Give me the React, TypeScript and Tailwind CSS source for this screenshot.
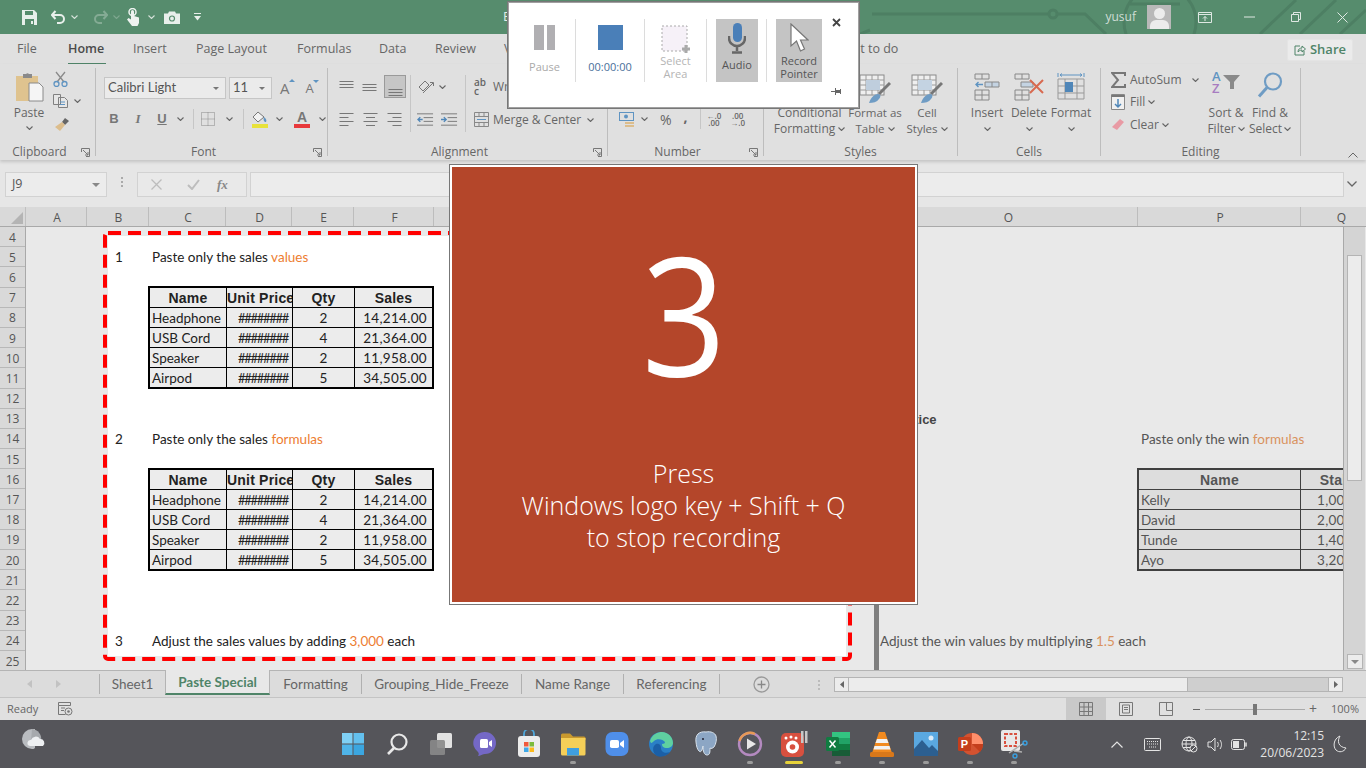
import React from "react";

const Chev = ({ c = "#666", className = "" }: { c?: string; className?: string }) => (
  <svg width="7" height="4" viewBox="0 0 7 4" className={`shrink-0 ${className}`}><path d="M.5.5 3.5 3.5 6.5.5" fill="none" stroke={c} strokeWidth="1.1" /></svg>
);
const Launcher = () => (
  <svg width="9" height="9" viewBox="0 0 9 9"><path d="M.5 4V.5H8.5V8.5H5" fill="none" stroke="#777" /><path d="M2 2 7 7M7 4V7H4" fill="none" stroke="#777" /></svg>
);
const Sep = ({ className = "h-[22px]" }: { className?: string }) => <div className={`w-px bg-[#c6c6c6] shrink-0 ${className}`} />;

const Lines = ({ kind }: { kind: "top" | "mid" | "bot" | "l" | "c" | "r" }) => {
  const y = kind === "top" ? [3, 6, 9] : kind === "mid" ? [6, 9, 12] : kind === "bot" ? [10, 13, 16] : [2, 6, 10, 14];
  const w = (i: number) => (kind === "l" || kind === "c" || kind === "r" ? (i % 2 ? 9 : 14) : 14);
  return (
    <svg width="15" height="18" viewBox="0 0 15 18">
      {y.map((v, i) => {
        const x = kind === "r" ? 14.5 - w(i) : kind === "c" ? (15 - w(i)) / 2 : 0.5;
        return <path key={v} d={`M${x} ${v + 0.5}h${w(i)}`} stroke="#777" />;
      })}
    </svg>
  );
};
const Indent = ({ rev }: { rev?: boolean }) => (
  <svg width="17" height="15" viewBox="0 0 18 15">
    <path d="M0 1.5H17M7 5.5H17M7 9.5H17M0 13.5H17" stroke="#777" />
    {rev ? <path d="M6 7.5H1M3.5 5 1 7.5 3.5 10" fill="none" stroke="#4f86b8" strokeWidth="1.4" /> : <path d="M0 7.5H5M3 5 5.5 7.5 3 10" fill="none" stroke="#4f86b8" strokeWidth="1.4" />}
  </svg>
);

const Group = ({ w, label, launcher, children }: { w: string; label: string; launcher?: boolean; children: React.ReactNode }) => (
  <div className={`${w} h-[88px] shrink-0 border-r border-[#bdbdbd] flex flex-col`}>
    <div className="h-[78px] flex">{children}</div>
    <div className="h-[10px] grid grid-cols-[1fr_auto_1fr] px-[3px] leading-[12px] text-[12px] text-[#666]">
      <div />
      <div className={launcher ? "-translate-x-[8px]" : ""}>{label}</div>
      <div className="flex justify-end items-start pt-[2px] pr-[2px]">{launcher && <Launcher />}</div>
    </div>
  </div>
);

const TableIcon = ({ fill = "#bfcedd" }: { fill?: string }) => (
  <svg width="32" height="30" viewBox="0 0 32 30">
    <rect x="1" y="1" width="24" height="20" fill="#efefef" stroke="#8a8a8a" />
    <path d="M1 6H25M1 11H25M1 16H25M7 1V21M13 1V21M19 1V21" stroke="#9a9a9a" />
    <rect x="7" y="6" width="14" height="10" fill={fill} />
    <path d="M31 9 20 20" stroke="#777" strokeWidth="3" />
    <path d="M10 29c2-6 6-9 9-9 3 0 3 3 1 5-2 3-6 4-10 4Z" fill="#6f9cc4" />
  </svg>
);

const hash = "########";
const SalesTable = () => {
  const rows = [
    ["Headphone", hash, "2", "14,214.00"],
    ["USB Cord", hash, "4", "21,364.00"],
    ["Speaker", hash, "2", "11,958.00"],
    ["Airpod", hash, "5", "34,505.00"],
  ];
  return (
    <div className="ml-[45px] w-[286px] h-[103px] border-2 border-black bg-[#ececec] grid grid-cols-[77px_66px_62px_77px] grid-rows-[20px_20px_20px_20px_19px] text-[13.5px] leading-[20px] text-[#222]">
      {["Name", "Unit Price", "Qty", "Sales"].map((h, i) => (
        <div key={h} className={`border-b border-black font-['Liberation_Sans'] font-bold text-[14px] tracking-[0.2px] overflow-hidden whitespace-nowrap ${i === 1 ? "" : "text-center"} ${i < 3 ? "border-r" : ""}`}>{h}</div>
      ))}
      {rows.map((r, ri) =>
        r.map((c, i) => (
          <div key={ri + "-" + i} className={`overflow-hidden whitespace-nowrap border-black ${ri < 3 ? "border-b" : ""} ${i < 3 ? "border-r" : ""} ${i === 0 ? "pl-[2px]" : i === 1 ? "text-right pr-[4px] text-[13px] tracking-[-1.3px]" : i === 2 ? "text-center" : "text-right pr-[5px] tracking-[0.3px]"}`}>{c}</div>
        ))
      )}
    </div>
  );
};

const WinTable = () => {
  const rows = [["Kelly", "1,000"], ["David", "2,000"], ["Tunde", "1,400"], ["Ayo", "3,200"]];
  return (
    <div className="ml-[258px] w-[240px] h-[103px] border-2 border-[#404040] bg-[#dddddd] grid grid-cols-[162px_76px] grid-rows-[20px_20px_20px_20px_19px] text-[13.5px] leading-[20px] text-[#555]">
      <div className="border-b border-r border-[#404040] font-['Liberation_Sans'] font-bold text-[14px] tracking-[0.2px] text-center">Name</div>
      <div className="border-b border-[#404040] font-['Liberation_Sans'] font-bold text-[14px] tracking-[0.2px] text-center">Stake</div>
      {rows.map((r, ri) => (
        <React.Fragment key={r[0]}>
          <div className={`border-r border-[#404040] pl-[2px] ${ri < 3 ? "border-b" : ""}`}>{r[0]}</div>
          <div className={`border-[#404040] pl-[16px] tracking-[0.3px] ${ri < 3 ? "border-b" : ""}`}>{r[1]}</div>
        </React.Fragment>
      ))}
    </div>
  );
};

const Line = ({ n, children }: { n: string; children: React.ReactNode }) => (
  <div className="h-[20px] flex items-center text-[13.5px] text-[#222]">
    <span className="ml-[12px] w-[37px]">{n}</span>
    <span>{children}</span>
  </div>
);

const columns: [string, string][] = [
  ["A", "w-[61px]"], ["B", "w-[62px]"], ["C", "w-[77px]"], ["D", "w-[66px]"], ["E", "w-[62px]"], ["F", "w-[80px]"], ["", "w-[444px]"], ["O", "w-[260px]"], ["P", "w-[163px]"], ["Q", "w-[80px]"],
];

const TaskIcons: React.ReactNode[] = [
  <svg key="win" width="24" height="24" viewBox="0 0 24 24"><path d="M1 1h10.5v10.5H1z" fill="#7fd0f5" /><path d="M12.5 1H23v10.5H12.5z" fill="#63c0ee" /><path d="M1 12.5h10.5V23H1z" fill="#4fb4e8" /><path d="M12.5 12.5H23V23H12.5z" fill="#3ba6e0" /></svg>,
  <svg key="s" width="24" height="24" viewBox="0 0 24 24"><circle cx="14" cy="10" r="7.5" fill="none" stroke="#e8e8e8" strokeWidth="2.2" /><path d="M9 16 3 22" stroke="#e8e8e8" strokeWidth="2.6" /></svg>,
  <svg key="t" width="26" height="26" viewBox="0 0 26 26"><rect x="9" y="2" width="15" height="15" rx="1.5" fill="#e2e2e2" /><rect x="2" y="9" width="15" height="15" rx="1.5" fill="#8a8a8a" fillOpacity=".9" /></svg>,
  <svg key="c" width="24" height="26" viewBox="0 0 24 26"><path d="M12 1a11 11 0 0 1 0 22c-2 0-5 2-7 2 1-1 1-3 0-4A11 11 0 0 1 12 1Z" fill="#7468c6" /><rect x="7" y="8" width="8" height="9" rx="1.5" fill="#fff" /><path d="M16 11l3-2v7l-3-2Z" fill="#fff" /></svg>,
  <svg key="st" width="24" height="28" viewBox="0 0 24 28"><path d="M7 7V4a5 5 0 0 1 10 0v3" fill="none" stroke="#4fa8dc" strokeWidth="1.8" /><rect x="1" y="6" width="22" height="21" rx="3" fill="#ececec" /><path d="M7 12h4.5v4.5H7z" fill="#f05a3c" /><path d="M12.5 12H17v4.5h-4.5z" fill="#7cbb3c" /><path d="M7 17.5h4.5V22H7z" fill="#3fa8e8" /><path d="M12.5 17.5H17V22h-4.5z" fill="#fcba1c" /></svg>,
  <svg key="e" width="26" height="24" viewBox="0 0 26 24"><path d="M1 3a1.5 1.5 0 0 1 1.5-1.5H10l3 3h11A1.5 1.5 0 0 1 25.5 6v2H1Z" fill="#c9992e" /><path d="M1 6h24.5v16a1.5 1.5 0 0 1-1.5 1.5H2.5A1.5 1.5 0 0 1 1 22Z" fill="#f5cf58" /><path d="M7 16h12v7.5H7z" fill="#3f9fe0" /></svg>,
  <svg key="z" width="24" height="26" viewBox="0 0 24 26"><rect x="0.5" y="1" width="23" height="24" rx="7" fill="#4f8fea" /><rect x="5" y="9" width="9" height="8" rx="1.8" fill="#fff" /><path d="M15 12l4-3v8l-4-3Z" fill="#fff" /></svg>,
  <svg key="ed" width="26" height="26" viewBox="0 0 26 26"><circle cx="13" cy="13" r="12" fill="#2a7fc6" /><path d="M2 10C4 3 10 1 14 1c6 0 11 5 11 11 0 3-3 5-6 5-4 0-5-2-5-4 2 0 3-1 3-2-2-3-8-4-11-1-2 2-3 3-4 0Z" fill="#5fd0a0" /><path d="M9 25c-5-3-5-10-1-12 3-1 5 1 5 4 0 4 4 6 9 4-2 3-8 6-13 4Z" fill="#1b5fa6" /></svg>,
  <svg key="pg" width="26" height="28" viewBox="0 0 26 28"><path d="M13 2C6 1 2 5 3 12c.5 4 1 7 3 9 1 1 2 1 3-1l1-4c0 5 1 9 4 9 3 0 3-3 3-7 1 1 3 0 4-1 2-3 3-8 2-11-1-3-5-5-10-4Z" fill="#8ca6c4" stroke="#d8e2ec" /><circle cx="10" cy="9" r="1" fill="#223" /></svg>,
  <svg key="p" width="26" height="28" viewBox="0 0 26 28"><circle cx="13" cy="14" r="11" fill="#55565c" stroke="#b48ac0" strokeWidth="2.4" /><path d="M2.5 11A11 11 0 0 1 18 4" fill="none" stroke="#e79a55" strokeWidth="2.4" /><path d="M10 8.5 19 14l-9 5.5Z" fill="#e8e8e8" /></svg>,
  <svg key="g" width="28" height="28" viewBox="0 0 28 28"><rect x="1" y="3" width="23" height="24" rx="5" fill="#d8503f" /><circle cx="12.5" cy="17" r="6.5" fill="#fff" /><circle cx="12.5" cy="17" r="2.8" fill="#d8503f" /><circle cx="6" cy="8" r="1.5" fill="#fff" /><circle cx="11" cy="7" r="1.5" fill="#fff" /><circle cx="16" cy="8" r="1.5" fill="#fff" /><path d="M21 1h2.5v12H21zM25 1h2.5v12H25z" fill="#c8c8c8" /></svg>,
  <svg key="x" width="26" height="26" viewBox="0 0 26 26"><rect x="7" y="1" width="18" height="24" rx="1.5" fill="#21a366" /><path d="M7 1h18v6H7z" fill="#33c481" /><path d="M7 13h18v6H7z" fill="#107c41" /><path d="M7 19h18v6H7z" fill="#185c37" /><rect x="1" y="6" width="13" height="14" rx="1.5" fill="#107c41" /><path d="M4.5 9.5 10.5 16.5M10.5 9.5 4.5 16.5" stroke="#fff" strokeWidth="1.5" /></svg>,
  <svg key="v" width="26" height="28" viewBox="0 0 26 28"><path d="M10 2h6l7 21H3Z" fill="#f18a1f" /><path d="M8 9h10l1.5 4h-13ZM5.500 16h15l1 3.500h-17Z" fill="#f1f1f1" /><rect x="1" y="22" width="24" height="5" rx="1.5" fill="#d9781a" /></svg>,
  <svg key="ph" width="26" height="26" viewBox="0 0 26 26"><rect x="1" y="1" width="24" height="24" fill="#5aa8e0" /><path d="M1 25V18L9 9l7 8 3-3 6 6v5Z" fill="#2c5f90" /><circle cx="18" cy="7" r="2.5" fill="#dcebf7" /></svg>,
  <svg key="pp" width="26" height="26" viewBox="0 0 26 26"><circle cx="15" cy="13" r="11" fill="#d35230" /><path d="M15 13V2a11 11 0 0 1 11 11Z" fill="#ff8f6b" /><path d="M15 13h11a11 11 0 0 1-3 8Z" fill="#c43e1c" /><rect x="1" y="6" width="13" height="14" rx="1.5" fill="#c43e1c" /><text x="7.5" y="17" textAnchor="middle" fill="#fff" fontSize="11" fontWeight="700" fontFamily="Liberation Sans">P</text></svg>,
  <svg key="sn" width="28" height="30" viewBox="0 0 28 30"><rect x="1" y="1" width="19" height="21" rx="2" fill="#e8e8e8" /><rect x="5" y="5" width="11" height="12" fill="none" stroke="#d8503f" strokeWidth="2" strokeDasharray="3 1.5" /><path d="M9 24 24 14M14 22l8 1" stroke="#b0b0b0" strokeWidth="1.5" /><circle cx="25" cy="14" r="2" fill="none" stroke="#3aa0e0" strokeWidth="1.4" /><circle cx="15" cy="27" r="2" fill="none" stroke="#3aa0e0" strokeWidth="1.4" /></svg>,
];
const dots = [0, 0, 0, 0, 0, 1, 0, 0, 0, 1, 2, 1, 1, 1, 1, 1];

export default function App() {
  return (
    <div className="relative w-[1366px] h-[768px] overflow-hidden bg-[#e8e8e8] font-['Open_Sans',sans-serif] flex flex-col text-[#555]">
      {/* Title bar */}
      <div className="relative h-[34px] shrink-0 bg-[#568c6d] flex items-center text-[#e3ebe6] overflow-hidden">
        <svg className="absolute left-[860px] top-0" width="506" height="34" viewBox="0 0 506 34">
          <g fill="none" stroke="#4d7f63" strokeWidth="3">
            <path d="M12 14H190" /><circle cx="193" cy="14" r="4" /><circle cx="300" cy="22" r="36" />
            <path d="M196 14H225L246 34M320 4H270M400 34 436 0M440 34 476 0M480 34 506 10M0 34 10 30" />
          </g>
        </svg>
        <div className="relative flex items-center w-[500px]">
          <svg className="ml-[22px]" width="15" height="15" viewBox="0 0 15 15"><path d="M0 0H12L15 3V15H0Z" fill="#e8efeb" /><path d="M3 1h8v4H3z" fill="#568c6d" /><path d="M3 9h9v6H3z" fill="#568c6d" /><path d="M9 11h2v3H9z" fill="#e8efeb" /></svg>
          <svg className="ml-[14px]" width="15" height="14" viewBox="0 0 15 14"><path d="M1 5h8a4 4 0 0 1 0 8H6M4.5 1 1 5l3.5 4" fill="none" stroke="#e8efeb" strokeWidth="2" /></svg>
          <Chev c="#d5e2da" className="ml-[5px]" />
          <svg className="ml-[15px] opacity-40" width="15" height="14" viewBox="0 0 15 14"><path d="M14 5H6a4 4 0 0 0 0 8h3M10.5 1 14 5l-3.5 4" fill="none" stroke="#c9dbd0" strokeWidth="2" /></svg>
          <Chev c="#7fa790" className="ml-[5px]" />
          <svg className="ml-[7px]" width="13" height="18" viewBox="0 0 13 18"><circle cx="5.5" cy="4" r="3.5" fill="none" stroke="#eef3f0" strokeWidth="1.5" /><path d="M4 3.5a1.5 1.5 0 0 1 3 0V8l5 1.5V15l-1.5 3H5L0 11.5 1.5 10 4 11.5Z" fill="#eef3f0" /></svg>
          <Chev c="#d5e2da" className="ml-[8px]" />
          <svg className="ml-[9px]" width="16" height="13" viewBox="0 0 16 13"><path d="M0 2.5h4L5 .5h6l1 2h4V13H0Z" fill="#e8efeb" /><circle cx="8" cy="7.5" r="2.5" fill="none" stroke="#568c6d" strokeWidth="1.2" /></svg>
          <svg className="ml-[14px]" width="7" height="8" viewBox="0 0 7 8"><path d="M0 .5h7" stroke="#e8efeb" /><path d="M0 3h7L3.5 7.5Z" fill="#e8efeb" /></svg>
        </div>
        <span className="relative text-[13px] ml-[3px]">Excel</span>
        <span className="relative ml-auto text-[12px] mr-[11px] text-[#cfddd5]">yusuf</span>
        <div className="relative w-[24px] h-[24px] bg-[#b9b9b9] overflow-hidden flex flex-col items-center mr-[27px] shrink-0">
          <div className="w-[11px] h-[11px] rounded-full bg-[#ececec] mt-[3px] shrink-0" />
          <div className="w-[19px] h-[10px] rounded-t-[6px] bg-[#ececec] mt-[1px] shrink-0" />
        </div>
        <svg className="relative mr-[32px]" width="14" height="11" viewBox="0 0 14 11"><path d="M.5.5h13v10H.5zM.5 2.5h13" fill="none" stroke="#dfe8e3" /><path d="M7 9V4.5M5 6.5l2-2 2 2" fill="none" stroke="#dfe8e3" /></svg>
        <svg className="relative mr-[36px]" width="11" height="2" viewBox="0 0 11 2"><path d="M0 1h11" stroke="#dfe8e3" /></svg>
        <svg className="relative mr-[36px]" width="10" height="10" viewBox="0 0 10 10"><path d="M.5 2.5h7v7h-7zM2.5 2.5V.5h7v7h-2" fill="none" stroke="#dfe8e3" /></svg>
        <svg className="relative mr-[18px]" width="11" height="11" viewBox="0 0 11 11"><path d="M.5.5l10 10M10.5.5l-10 10" stroke="#dfe8e3" /></svg>
      </div>

      {/* Tabs */}
      <div className="h-[30px] shrink-0 bg-[#e0e0e0] flex items-center text-[12.5px] text-[#666] whitespace-nowrap">
        <span className="ml-[17px] w-[20px]">File</span>
        <span className="ml-[31px] w-[38px] relative text-[#4a4a4a] font-semibold">Home<span className="absolute left-0 right-0 top-[23px] h-[2px] bg-[#4f8468]" /></span>
        <span className="ml-[27px] w-[33px]">Insert</span>
        <span className="ml-[30px] w-[71px]">Page Layout</span>
        <span className="ml-[30px] w-[54px]">Formulas</span>
        <span className="ml-[28px] w-[28px]">Data</span>
        <span className="ml-[28px] w-[41px]">Review</span>
        <span className="ml-[28px] w-[30px]">View</span>
        <span className="ml-[200px] w-[171px]">Tell me what you want to do</span>
        <div className="ml-auto mr-[13px] mt-[1px] w-[66px] h-[22px] rounded-[2px] bg-[#ebebeb] border border-[#e4e4e4] flex items-center justify-center gap-[4px] text-[13px] text-[#4f8468] font-semibold">
          <svg width="12" height="12" viewBox="0 0 12 12"><path d="M6 2H1v9h9V7M4 8c0-3 2-4 4-4V2l3.5 3L8 8V6C6 6 5 7 4 8Z" fill="none" stroke="#4f8468" /></svg>
          Share
        </div>
      </div>

      {/* Ribbon */}
      <div className="relative h-[96px] shrink-0 bg-[#e0e0e0] shadow-[0_2px_3px_rgba(0,0,0,0.15)] flex pt-[4px] text-[12px] text-[#666]">
        <Group w="w-[96px]" label="Clipboard" launcher>
          <div className="w-[58px] flex flex-col items-center pt-[3px]">
            <svg width="29" height="31" viewBox="0 0 29 31"><path d="M1 5h22v25H1Z" fill="#dfc38f" /><path d="M8 3h3a2 2 0 0 1 3 0h3v4H8Z" fill="#8a8a8a" /><path d="M14 12h10l4 4v14H14Z" fill="#f5f5f5" stroke="#8a8a8a" /></svg>
            <span className="mt-[3px] leading-[16px]">Paste</span>
            <Chev className="mt-[5px]" />
          </div>
          <div className="flex flex-col pt-[3px]">
            <svg className="ml-[-5px]" width="15" height="16" viewBox="0 0 15 16"><path d="M3 1 11 11M12 1 4 11" stroke="#8a8a8a" strokeWidth="1.3" /><circle cx="3.5" cy="13" r="2.5" fill="none" stroke="#5f94c2" strokeWidth="1.3" /><circle cx="11.5" cy="13" r="2.5" fill="none" stroke="#5f94c2" strokeWidth="1.3" /></svg>
            <div className="flex items-center mt-[7px] ml-[-5px]">
              <svg width="15" height="14" viewBox="0 0 15 14"><path d="M.5.5h7v10h-7zM5.5 3.5h6l3 3v7h-9z" fill="#e6e6e6" stroke="#808080" /><path d="M7 8h5M7 10.5h5" stroke="#5f94c2" /></svg>
              <Chev className="ml-[6px]" />
            </div>
            <svg className="ml-[-4px] mt-[9px]" width="16" height="15" viewBox="0 0 16 15"><path d="M11 1 15 4 11 8 8 5Z" fill="#666" /><path d="M8 5 11 8 6 14 1 10Z" fill="#dcbd8c" /></svg>
          </div>
        </Group>

        <Group w="w-[232px]" label="Font" launcher>
          <div className="pl-[8px] pt-[9px] flex flex-col">
            <div className="flex items-center h-[22px]">
              <div className="w-[122px] h-[22px] bg-[#ebebeb] border border-[#c6c6c6] flex items-center pl-[3px] pr-[6px] text-[#555]">
                <span className="flex-1 font-['Lato'] text-[13px]">Calibri Light</span>
                <svg width="6" height="3" viewBox="0 0 6 3"><path d="M0 0h6L3 3Z" fill="#777" /></svg>
              </div>
              <div className="ml-[3px] w-[43px] h-[22px] bg-[#ebebeb] border border-[#c6c6c6] flex items-center pl-[3px] pr-[6px] text-[#555]">
                <span className="flex-1 font-['Lato'] text-[13px]">11</span>
                <svg width="6" height="3" viewBox="0 0 6 3"><path d="M0 0h6L3 3Z" fill="#777" /></svg>
              </div>
              <span className="ml-[8px] text-[15px] text-[#777] leading-none relative">A<svg className="absolute left-[9px] top-[-2px]" width="6" height="3" viewBox="0 0 6 3"><path d="M3 0l3 3H0Z" fill="#5f94c2" /></svg></span>
              <span className="ml-[16px] text-[13px] text-[#777] leading-none relative">A<svg className="absolute left-[7px] top-[-2px]" width="6" height="3" viewBox="0 0 6 3"><path d="M0 0h6L3 3Z" fill="#5f94c2" /></svg></span>
            </div>
            <div className="flex items-center h-[22px] mt-[9px] text-[13px] text-[#777]">
              <span className="w-[20px] text-center font-bold font-['Liberation_Sans']">B</span>
              <span className="w-[28px] text-center italic font-['Liberation_Serif'] font-bold">I</span>
              <span className="w-[20px] text-center underline font-bold font-['Liberation_Sans']">U</span>
              <Chev className="ml-[5px]" />
              <Sep className="ml-[9px] h-[20px]" />
              <svg className="ml-[7px]" width="14" height="14" viewBox="0 0 14 14"><rect x=".5" y=".5" width="13" height="13" fill="none" stroke="#888" strokeDasharray="1 1" /><path d="M.5 7h13M7 .5v13" stroke="#888" strokeDasharray="1 1" /></svg>
              <Chev className="ml-[11px]" />
              <Sep className="ml-[10px] h-[20px]" />
              <div className="ml-[8px] flex flex-col items-center">
                <svg width="16" height="13" viewBox="0 0 16 13"><path d="M6 1 1 6l5 5 6-5Z" fill="#f2f2f2" stroke="#777" /><path d="M12 6c2 2 3 3 2 5-2 0-3-2-2-5Z" fill="#5f94c2" /></svg>
                <div className="w-[16px] h-[4px] bg-[#e8e23a]" />
              </div>
              <Chev className="ml-[8px]" />
              <div className="ml-[11px] flex flex-col items-center leading-[13px] font-bold font-['Liberation_Sans'] text-[14px]">
                A
                <div className="w-[16px] h-[4px] bg-[#e8393c]" />
              </div>
              <Chev className="ml-[9px]" />
            </div>
          </div>
        </Group>

        <Group w="w-[280px]" label="Alignment" launcher>
          <div className="flex pl-[11px] pt-[6px]">
            <div className="flex flex-col w-[71px]">
              <div className="flex items-center h-[25px]">
                <div className="w-[23px] flex"><Lines kind="top" /></div>
                <div className="w-[22px] flex"><Lines kind="mid" /></div>
                <div className="w-[22px] h-[23px] bg-[#c6c6c6] border border-[#9a9a9a] flex justify-center items-end"><Lines kind="bot" /></div>
              </div>
              <div className="flex items-center h-[25px] mt-[8px]">
                <div className="w-[24px] flex"><Lines kind="l" /></div>
                <div className="w-[24px] flex"><Lines kind="c" /></div>
                <div className="w-[22px] flex"><Lines kind="r" /></div>
              </div>
            </div>
            <Sep className="h-[57px] mt-[1px]" />
            <div className="flex flex-col w-[54px] pl-[6px]">
              <div className="flex items-center h-[25px]">
                <svg className="ml-[1px]" width="17" height="16" viewBox="0 0 17 16"><path d="M1 8 7 2l4 4-6 6Z" fill="none" stroke="#777" /><path d="M5 14 15 4M12 3.5h3.5V7" fill="none" stroke="#777" /></svg>
                <Chev className="ml-[4px]" />
              </div>
              <div className="flex items-center h-[25px] mt-[8px] gap-[7px]"><Indent rev /><Indent /></div>
            </div>
            <Sep className="h-[57px] mt-[1px]" />
            <div className="flex flex-col pl-[8px] whitespace-nowrap">
              <div className="flex items-center h-[25px]">
                <span className="text-[10px] leading-[9px] w-[12px] font-semibold">ab<br />c</span>
                <span className="ml-[7px] text-[12px]">Wrap Text</span>
              </div>
              <div className="flex items-center h-[25px] mt-[8px]">
                <svg width="15" height="15" viewBox="0 0 15 15"><path d="M.5.5h14v14H.5zM.5 4.5h14M.5 10.5h14M5 .5v4M10 .5v4M5 10.5v4M10 10.5v4" fill="none" stroke="#888" /><path d="M3 7.5h9" stroke="#5f94c2" /></svg>
                <span className="ml-[4px]">Merge &amp; Center</span>
                <Chev className="ml-[6px]" />
              </div>
            </div>
          </div>
        </Group>

        <Group w="w-[156px]" label="Number" launcher>
          <div className="flex items-center pl-[11px] pt-[24px] h-[78px]">
            <svg width="16" height="15" viewBox="0 0 16 15"><rect x=".5" y=".5" width="14" height="8" fill="none" stroke="#5f94c2" /><circle cx="7" cy="4.5" r="2" fill="#5f94c2" /><path d="M6 11h9M6 14h9" stroke="#dcbd8c" strokeWidth="2" /></svg>
            <Chev className="ml-[6px]" />
            <span className="ml-[12px] text-[14px]">%</span>
            <span className="ml-[12px] text-[14px] font-bold -mt-[6px]">,</span>
            <Sep className="ml-[12px] h-[20px]" />
            <span className="ml-[6px] text-[8px] leading-[7px] text-center font-semibold">←.0<br />.00</span>
            <span className="ml-[9px] text-[8px] leading-[7px] text-center font-semibold">.00<br />→.0</span>
          </div>
        </Group>

        <Group w="w-[194px]" label="Styles">
          <div className="flex leading-[16px] text-center whitespace-nowrap">
            <div className="w-[85px] pl-[6px] pt-[37px] flex flex-col items-center">
              <span>Conditional</span>
              <span className="flex items-center gap-[3px]">Formatting<Chev /></span>
            </div>
            <div className="w-[52px] flex flex-col items-center pt-[6px] text-[11.5px]">
              <TableIcon />
              <span className="mt-[1px]">Format as</span>
              <span className="flex items-center gap-[3px]">Table<Chev /></span>
            </div>
            <div className="w-[52px] flex flex-col items-center pt-[6px] text-[11.5px]">
              <TableIcon fill="#c4d3e2" />
              <span className="mt-[1px]">Cell</span>
              <span className="flex items-center gap-[3px]">Styles<Chev /></span>
            </div>
          </div>
        </Group>

        <Group w="w-[143px]" label="Cells">
          <div className="flex pl-[8px] leading-[16px]">
            {[
              ["Insert", <svg key="i" width="26" height="28" viewBox="0 0 26 28"><path d="M1 1h14v5H1zM8 1v5M1 17h14v10H1zM1 22h14M8 17v10" fill="none" stroke="#888" /><path d="M11 9h14v5H11zM18 9v5" fill="#c4d3e2" stroke="#888" /><path d="M9 11.5H2M4.5 9 2 11.5 4.5 14" fill="none" stroke="#5f94c2" strokeWidth="1.4" /></svg>],
              ["Delete", <svg key="d" width="30" height="28" viewBox="0 0 30 28"><path d="M1 1h14v5H1zM8 1v5M1 17h14v10H1zM1 22h14M8 17v10" fill="none" stroke="#888" /><path d="M7 9h12v5H7z" fill="#c4d3e2" stroke="#888" /><path d="M16 7 29 20M29 7 16 20" stroke="#d86a50" strokeWidth="2" /></svg>],
              ["Format", <svg key="f" width="28" height="30" viewBox="0 0 28 30"><path d="M1 1v4M27 1v4M3 3h22M3 3l2-1.5M3 3l2 1.5M25 3l-2-1.5M25 3l-2 1.5" fill="none" stroke="#5f94c2" /><path d="M1 7h26v20H1zM1 14h26M1 21h26M8 7v20M20 7v20" fill="none" stroke="#999" /><rect x="8" y="10" width="8" height="10" fill="#4f86b8" /></svg>],
            ].map(([l, icon]) => (
              <div key={l as string} className="w-[42px] flex flex-col items-center">
                <div className="h-[35px] flex items-center pt-[3px]">{icon}</div>
                <span className="mt-[2px]">{l}</span>
                <Chev className="mt-[6px]" />
              </div>
            ))}
          </div>
        </Group>

        <Group w="w-[200px]" label="Editing">
          <div className="flex whitespace-nowrap">
            <div className="flex flex-col pl-[10px] pt-[1px] w-[103px]">
              <div className="flex items-center h-[21px]">
                <svg width="15" height="16" viewBox="0 0 15 16"><path d="M14 4V1H1l6 7-6 7h13v-3" fill="none" stroke="#777" strokeWidth="2" /></svg>
                <span className="ml-[4px]">AutoSum</span>
                <Chev className="ml-[10px]" />
              </div>
              <div className="flex items-center h-[21px] mt-[1px]">
                <svg width="14" height="16" viewBox="0 0 14 16"><path d="M.5.5h13v15H.5z" fill="#f0f0f0" stroke="#888" /><path d="M.5 1h13v2H.5z" fill="#777" /><path d="M7 5v8M4 10l3 3 3-3" fill="none" stroke="#4f86b8" strokeWidth="1.5" /></svg>
                <span className="ml-[5px]">Fill</span>
                <Chev className="ml-[3px]" />
              </div>
              <div className="flex items-center h-[21px] mt-[2px]">
                <svg width="14" height="13" viewBox="0 0 14 13"><path d="M9 1 13 4 6 12 1 9Z" fill="#e89aa4" /></svg>
                <span className="ml-[5px]">Clear</span>
                <Chev className="ml-[3px]" />
              </div>
            </div>
            <div className="flex flex-col items-center w-[44px] leading-[16px] pt-[2px]">
              <div className="h-[31px] flex items-start">
                <div className="text-[13px] leading-[12px] font-semibold w-[11px] text-[#5f94c2]">A<br /><span className="text-[#a77cc0]">Z</span></div>
                <svg className="mt-[5px]" width="17" height="14" viewBox="0 0 17 14"><path d="M0 0h17l-6 7v7H7V7Z" fill="#8a8a8a" /></svg>
              </div>
              <span className="mt-[4px]">Sort &amp;</span>
              <span className="flex items-center gap-[2px]">Filter<Chev /></span>
            </div>
            <div className="flex flex-col items-center w-[44px] leading-[16px] pt-[2px]">
              <svg className="h-[31px]" width="28" height="30" viewBox="0 0 28 30"><circle cx="17" cy="11" r="8" fill="none" stroke="#6f9cc4" strokeWidth="2.2" /><path d="M11 17 3 26" stroke="#6f9cc4" strokeWidth="3" /></svg>
              <span className="mt-[4px]">Find &amp;</span>
              <span className="flex items-center gap-[2px]">Select<Chev /></span>
            </div>
          </div>
        </Group>
        <svg className="ml-[47px] mt-[84px]" width="10" height="6" viewBox="0 0 10 6"><path d="M.5 5.5 5 1l4.5 4.5" fill="none" stroke="#666" /></svg>
      </div>

      {/* Formula bar */}
      <div className="h-[47px] shrink-0 bg-[#e6e6e6] flex items-start pt-[12px] text-[#777]">
        <div className="ml-[5px] w-[102px] h-[25px] bg-[#ececec] border border-[#d2d2d2] flex items-center pl-[6px] pr-[6px] text-[12.5px] text-[#555]">
          <span className="flex-1">J9</span>
          <svg width="8" height="4" viewBox="0 0 8 4"><path d="M0 0h8L4 4Z" fill="#888" /></svg>
        </div>
        <div className="ml-[14px] mt-[5px] flex flex-col gap-[2px]">
          <div className="w-[2px] h-[2px] bg-[#aaa]" /><div className="w-[2px] h-[2px] bg-[#aaa]" /><div className="w-[2px] h-[2px] bg-[#aaa]" />
        </div>
        <div className="ml-[14px] w-[110px] h-[25px] bg-[#e9e9e9] border border-[#d2d2d2] flex items-center">
          <svg className="ml-[13px]" width="11" height="11" viewBox="0 0 11 11"><path d="M.5.5l10 10M10.5.5l-10 10" stroke="#bdbdbd" strokeWidth="1.3" /></svg>
          <svg className="ml-[25px]" width="13" height="11" viewBox="0 0 13 11"><path d="M1 6l4 4 7-9" fill="none" stroke="#bdbdbd" strokeWidth="2" /></svg>
          <span className="ml-[17px] font-['Liberation_Serif'] italic text-[13px] font-bold text-[#888]">fx</span>
        </div>
        <div className="ml-[3px] w-[1094px] h-[25px] bg-[#ececec] border border-[#d2d2d2]" />
        <svg className="ml-[3px] mt-[9px]" width="10" height="6" viewBox="0 0 10 6"><path d="M.5.5 5 5 9.5.5" fill="none" stroke="#666" strokeWidth="1.3" /></svg>
      </div>

      {/* Column headers */}
      <div className="h-[20px] shrink-0 flex bg-[#d9d9d9] border-b border-[#a9a9a9] text-[12px] text-[#555] overflow-hidden">
        <div className="w-[26px] shrink-0 border-r border-[#c0c0c0] flex items-end justify-end p-[2px]">
          <svg width="12" height="12" viewBox="0 0 12 12"><path d="M12 0V12H0Z" fill="#b4b4b4" /></svg>
        </div>
        {columns.map(([c, w], i) => (
          <div key={i} className={`${w} shrink-0 flex items-center justify-center border-r border-[#bdbdbd] pl-[2px] pt-[2px]`}>{c}</div>
        ))}
      </div>

      {/* Sheet */}
      <div className="flex-1 min-h-0 flex overflow-hidden">
        <div className="w-[26px] shrink-0 bg-[#d9d9d9] border-r border-[#a9a9a9] text-[12px] text-[#555] overflow-hidden">
          {Array.from({ length: 22 }, (_, i) => i + 4).map((n) => (
            <div key={n} className="h-[20.2px] border-b border-[#b8b8b8] flex items-center justify-center pt-[2px]">{n}</div>
          ))}
        </div>

        <div className="w-[1318px] shrink-0 border-r border-[#a9a9a9] flex overflow-hidden font-['Lato',sans-serif] bg-[#e9e9e9]">
          {/* Left panel with dashed annotation */}
          <div className="relative ml-[77px] mt-[4px] w-[749px] h-[430px] shrink-0">
            <div className="absolute left-[5px] top-[5px] w-[738px] h-[420px] bg-white" />
            <svg className="absolute left-0 top-0" width="749" height="430" viewBox="0 0 749 430">
              <rect x="2" y="2" width="745" height="426" rx="3" fill="none" stroke="#ff0000" strokeWidth="4" strokeDasharray="13 7" />
            </svg>
            <div className="relative pt-[16px]">
              <Line n="1">Paste only the sales <span className="text-[#ed7d31]">values</span></Line>
              <div className="mt-[19px]"><SalesTable /></div>
              <div className="mt-[40px]"><Line n="2">Paste only the sales <span className="text-[#ed7d31]">formulas</span></Line></div>
              <div className="mt-[19px]"><SalesTable /></div>
              <div className="mt-[60px]"><Line n="3">Adjust the sales values by adding <span className="text-[#ed7d31]">3,000</span> each</Line></div>
            </div>
          </div>
          <div className="ml-[22px] w-[5px] shrink-0 bg-[#7f7f7f]" />
          {/* Right panel */}
          <div className="w-[465px] shrink-0 text-[13.5px] text-[#555] pt-[183px] overflow-hidden">
            <div className="h-[19px] pl-[7px] font-['Liberation_Sans'] font-bold text-[13px] text-[#444] leading-[20px]">Practice</div>
            <div className="h-[20px] pl-[262px] flex items-center whitespace-nowrap">Paste only the win&nbsp;<span className="text-[#d9925e]">formulas</span></div>
            <div className="mt-[19px]"><WinTable /></div>
            <div className="mt-[60px] h-[20px] pl-[1px] flex items-center whitespace-nowrap">Adjust the win values by multiplying&nbsp;<span className="text-[#d9925e]">1.5</span>&nbsp;each</div>
          </div>
        </div>

        {/* Vertical scrollbar */}
        <div className="w-[21px] shrink-0 flex flex-col items-center relative -mt-[20px] bg-[#d4d4d4]">
          <div className="mt-[2px] w-[16px] h-[15px] bg-[#ececec] border border-[#b4b4b4] flex items-center justify-center">
            <svg width="8" height="4" viewBox="0 0 8 4"><path d="M4 0l4 4H0Z" fill="#888" /></svg>
          </div>
          <div className="mt-[31px] w-[15px] h-[226px] bg-[#ececec] border border-[#b4b4b4]" />
          <div className="mt-auto mb-[1px] w-[16px] h-[15px] bg-[#ececec] border border-[#b4b4b4] flex items-center justify-center">
            <svg width="8" height="4" viewBox="0 0 8 4"><path d="M0 0h8L4 4Z" fill="#888" /></svg>
          </div>
        </div>
      </div>

      {/* Sheet tabs */}
      <div className="h-[28px] shrink-0 bg-[#dcdcdc] border-t border-[#b4b4b4] border-b border-b-[#c4c4c4] flex items-start font-['Lato',sans-serif] text-[13.5px] text-[#666]">
        <div className="w-[100px] h-[20px] mt-[3px] flex items-center border-r border-[#b0b0b0] shrink-0">
          <svg className="ml-[27px]" width="5" height="8" viewBox="0 0 5 8"><path d="M5 0V8L0 4Z" fill="#c2c2c2" /></svg>
          <svg className="ml-[24px]" width="5" height="8" viewBox="0 0 5 8"><path d="M0 0V8L5 4Z" fill="#c2c2c2" /></svg>
        </div>
        <div className="w-[65px] h-[20px] mt-[3px] flex items-center justify-center">Sheet1</div>
        <div className="w-[105px] h-[25px] -mt-px bg-[#e8e8e8] border-b-2 border-[#4f8468] flex items-center justify-center font-bold text-[#4f8468] border-x border-x-[#b4b4b4] pt-[2px]">Paste Special</div>
        <div className="w-[92px] h-[20px] mt-[3px] flex items-center justify-center border-r border-[#b0b0b0]">Formatting</div>
        <div className="w-[160px] h-[20px] mt-[3px] flex items-center justify-center border-r border-[#b0b0b0]">Grouping_Hide_Freeze</div>
        <div className="w-[102px] h-[20px] mt-[3px] flex items-center justify-center border-r border-[#b0b0b0]">Name Range</div>
        <div className="w-[96px] h-[20px] mt-[3px] flex items-center justify-center border-r border-[#b0b0b0]">Referencing</div>
        <svg className="ml-[33px] mt-[5px]" width="17" height="17" viewBox="0 0 17 17"><circle cx="8.5" cy="8.5" r="7.5" fill="none" stroke="#9a9a9a" strokeWidth="1.3" /><path d="M4.5 8.5h8M8.5 4.5v8" stroke="#888" strokeWidth="1.3" /></svg>
        <div className="ml-[48px] mt-[9px] flex flex-col gap-[2px]">
          <div className="w-[2px] h-[2px] bg-[#bbb]" /><div className="w-[2px] h-[2px] bg-[#bbb]" /><div className="w-[2px] h-[2px] bg-[#bbb]" />
        </div>
        <div className="ml-[14px] mt-[6px] w-[509px] h-[15px] bg-[#cfcfcf] border border-[#b4b4b4] flex">
          <div className="w-[14px] bg-[#ececec] border-r border-[#b4b4b4] flex items-center justify-center"><svg width="4" height="7" viewBox="0 0 4 7"><path d="M4 0V7L0 3.5Z" fill="#666" /></svg></div>
          <div className="w-[339px] bg-[#ececec] border-r border-[#b4b4b4]" />
          <div className="flex-1" />
          <div className="w-[14px] bg-[#ececec] border-l border-[#b4b4b4] flex items-center justify-center"><svg width="4" height="7" viewBox="0 0 4 7"><path d="M0 0V7L4 3.5Z" fill="#666" /></svg></div>
        </div>
      </div>

      {/* Status bar */}
      <div className="h-[22px] shrink-0 bg-[#e0e0e0] flex items-center text-[11px] text-[#666]">
        <span className="ml-[7px] w-[51px]">Ready</span>
        <svg width="15" height="14" viewBox="0 0 15 14"><path d="M.5.5h12v3H.5zM.5 3.5v9h7" fill="none" stroke="#777" /><path d="M3 6h4M3 8.5h3" stroke="#777" /><circle cx="10.5" cy="9.5" r="3.5" fill="none" stroke="#777" /><circle cx="10.5" cy="9.5" r="1.3" fill="#777" /></svg>
        <div className="ml-[993px] w-[40px] h-[22px] bg-[#c9c9c9] flex items-center justify-center">
          <svg width="14" height="14" viewBox="0 0 14 14"><path d="M.5.5h13v13H.5zM.5 5h13M.5 9.5h13M5 .5v13M9.5 .5v13" fill="none" stroke="#777" /></svg>
        </div>
        <svg className="ml-[13px]" width="14" height="14" viewBox="0 0 14 14"><path d="M.5.5h13v13H.5z" fill="none" stroke="#777" /><path d="M3.5 3h7v8h-7zM5 5.5h4M5 7.5h4" fill="none" stroke="#777" /></svg>
        <svg className="ml-[26px]" width="14" height="14" viewBox="0 0 14 14"><path d="M.5.5h13v13H.5zM7.5.5v8h6" fill="none" stroke="#777" /></svg>
        <span className="ml-[20px] w-[7px] h-px bg-[#666]" />
        <div className="ml-[5px] w-[100px] h-px bg-[#aaa] flex items-center justify-center">
          <div className="w-[4px] h-[11px] bg-[#777] shrink-0" />
        </div>
        <span className="ml-[4px] text-[14px] leading-none">+</span>
        <span className="ml-[14px]">100%</span>
      </div>

      {/* Taskbar */}
      <div className="h-[48px] shrink-0 bg-[#55555a] flex items-center text-[#e4e4e4]">
        <svg className="ml-[21px] mb-[8px]" width="26" height="24" viewBox="0 0 26 24"><path d="M11 1a10 10 0 1 0 0 20c1 0 2 0 3-1V1Z" fill="#b9bcc0" /><path d="M11 1a10 10 0 0 1 9 12H10Z" fill="#a6a9ad" /><path d="M9 18a3 3 0 0 1 1-6 5 5 0 0 1 9-1 4 4 0 0 1 3 7Z" fill="#eef0f2" /></svg>
        <div className="ml-[284px] flex">
          {TaskIcons.map((icon, i) => (
            <div key={i} className="w-[44.07px] h-[48px] flex flex-col items-center">
              <div className="h-[41px] pt-[6px] flex items-center justify-center">{icon}</div>
              <div className={`h-[3px] rounded-full ${dots[i] === 2 ? "w-[18px] bg-[#e6d23a]" : dots[i] === 1 ? "w-[6px] bg-[#9b9b9b]" : "w-0"}`} />
            </div>
          ))}
        </div>
        <svg className="ml-[75px]" width="12" height="7" viewBox="0 0 12 7"><path d="M.5 6.5 6 1l5.5 5.5" fill="none" stroke="#e4e4e4" strokeWidth="1.2" /></svg>
        <svg className="ml-[21px]" width="17" height="13" viewBox="0 0 17 13"><rect x=".5" y=".5" width="16" height="12" rx="1" fill="none" stroke="#e4e4e4" /><path d="M3 3.5h11M3 6h11M5 9h7" stroke="#e4e4e4" strokeDasharray="1 1" /></svg>
        <svg className="ml-[20px]" width="17" height="17" viewBox="0 0 17 17"><circle cx="8" cy="8" r="7" fill="none" stroke="#e4e4e4" /><ellipse cx="8" cy="8" rx="3" ry="7" fill="none" stroke="#e4e4e4" /><path d="M1 8h14M2 4.5h12M2 11.5h12" stroke="#e4e4e4" /><circle cx="12.5" cy="12.5" r="3.5" fill="#55555a" stroke="#e4e4e4" /><path d="M10 15l5-5" stroke="#e4e4e4" /></svg>
        <svg className="ml-[9px]" width="17" height="15" viewBox="0 0 17 15"><path d="M1 5h3l4-4v13l-4-4H1Z" fill="none" stroke="#e4e4e4" /><path d="M10.5 5c1 1.5 1 3.5 0 5M13 3c2 3 2 6 0 9" fill="none" stroke="#e4e4e4" /></svg>
        <svg className="ml-[7px]" width="16" height="11" viewBox="0 0 16 11"><rect x=".5" y=".5" width="13" height="10" rx="2" fill="none" stroke="#e4e4e4" /><rect x="2" y="2" width="6" height="7" fill="#e4e4e4" /><path d="M15 3.5v4" stroke="#e4e4e4" strokeWidth="1.5" /></svg>
        <div className="ml-[7px] w-[70px] text-right text-[12px] leading-[17px]">
          <div>12:15</div>
          <div className="-ml-[6px] whitespace-nowrap">20/06/2023</div>
        </div>
        <svg className="ml-[9px]" width="14" height="18" viewBox="0 0 14 18"><path d="M7 1C4 6 5 12 13 13c-2 4-7 5-10 2C0 12 0 4 7 1Z" fill="none" stroke="#e4e4e4" /></svg>
      </div>

      {/* Recorder toolbar */}
      <div className="absolute left-[507px] top-[1px] w-[353px] h-[108px] bg-white border-2 border-[#a0a0a0] outline outline-1 outline-[#777] -outline-offset-[1px] flex pt-[16px] text-[11px] font-['Open_Sans',sans-serif]">
        <div className="w-[67px] h-[63px] pl-[5px] flex flex-col items-center border-r border-[#dcdcdc] shrink-0">
          <div className="flex gap-[3px] mt-[6px]"><div className="w-[10px] h-[25px] bg-[#b0afb2]" /><div className="w-[8px] h-[25px] bg-[#b0afb2]" /></div>
          <span className="mt-[9px] text-[#aaa] leading-[16px]">Pause</span>
        </div>
        <div className="w-[69px] h-[63px] flex flex-col items-center border-r border-[#dcdcdc] shrink-0">
          <div className="w-[25px] h-[25px] bg-[#4a7fb8] mt-[6px]" />
          <span className="mt-[9px] text-[#4a6f9a] leading-[16px]">00:00:00</span>
        </div>
        <div className="w-[62px] h-[63px] flex flex-col items-center border-r border-[#dcdcdc] shrink-0">
          <svg className="mt-[6px]" width="30" height="29" viewBox="0 0 30 29"><rect x="1" y="1" width="25" height="25" fill="#f6f1f8" stroke="#aaa" strokeDasharray="2 2" /><path d="M25 20v8M21 24h8" stroke="#aaa" strokeWidth="3" /></svg>
          <span className="text-[#b4b4b4] leading-[13px] text-center">Select<br />Area</span>
        </div>
        <div className="w-[60px] h-[63px] border-r border-[#dcdcdc] shrink-0 pl-[9px]">
          <div className="w-[42px] h-[63px] bg-[#c4c4c4] flex flex-col items-center">
            <svg className="mt-[4px]" width="18" height="31" viewBox="0 0 18 31"><rect x="5" y="0" width="9" height="19" rx="4.5" fill="#4a7fb8" /><path d="M1 13v2a8 8 0 0 0 16 0v-2M9 23v5M4 29.5h10" fill="none" stroke="#666" strokeWidth="2.5" /></svg>
            <span className="mt-[3px] text-[#555] leading-[16px]">Audio</span>
          </div>
        </div>
        <div className="pl-[9px] shrink-0">
          <div className="w-[46px] h-[63px] bg-[#c4c4c4] flex flex-col items-center">
            <svg className="mt-[4px]" width="19" height="29" viewBox="0 0 19 29"><path d="M1 1V23L6.5 18 10.5 28 14.5 26 10.5 17H18Z" fill="#fff" stroke="#777" strokeWidth="1.2" /></svg>
            <span className="mt-[2px] text-[#555] leading-[13px] text-center">Record<br />Pointer</span>
          </div>
        </div>
        <div className="ml-[8px] flex flex-col items-center h-[80px] w-[12px] -mt-[1px]">
          <svg width="9" height="9" viewBox="0 0 9 9"><path d="M1 1l7 7M8 1 1 8" stroke="#444" strokeWidth="1.8" /></svg>
          <svg className="mt-[60px]" width="11" height="9" viewBox="0 0 11 9"><path d="M0 4.5h4" stroke="#666" /><path d="M4 1h1v7H4zM5 3h4V2h1v5H9V6H5z" fill="#666" /></svg>
        </div>
      </div>

      {/* Countdown */}
      <div className="absolute left-[450px] top-[165px] w-[467px] h-[439px] bg-[#b4462a] border-2 border-white outline outline-1 outline-[#777] flex flex-col items-center text-white font-['Open_Sans',sans-serif] font-light">
        <div className="text-[164px] font-normal scale-x-[0.9] leading-[164px] mt-[64px] h-[164px]">3</div>
        <div className="mt-[62px] text-[25px] leading-[32px] text-center">
          Press<br />Windows logo key + Shift + Q<br />to stop recording
        </div>
      </div>
    </div>
  );
}
